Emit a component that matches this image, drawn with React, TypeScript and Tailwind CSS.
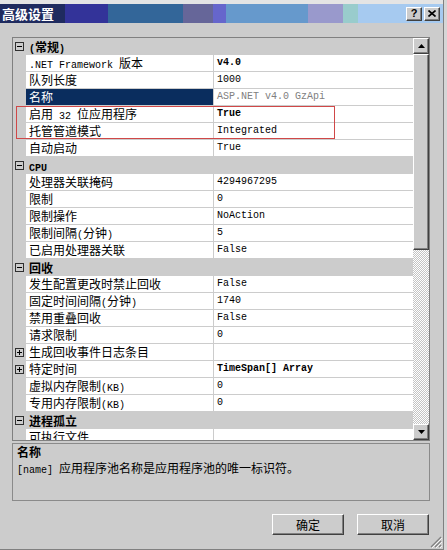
type Item = {
  label: string;
  value?: string;
  bold?: boolean;
  sel?: boolean;
  plus?: boolean;
  cat?: boolean;
};

const items: Item[] = [
  { label: "(常规)", cat: true },
  { label: ".NET Framework 版本", value: "v4.0", bold: true },
  { label: "队列长度", value: "1000" },
  { label: "名称", value: "ASP.NET v4.0 GzApi", sel: true },
  { label: "启用 32 位应用程序", value: "True", bold: true },
  { label: "托管管道模式", value: "Integrated" },
  { label: "自动启动", value: "True" },
  { label: "CPU", cat: true },
  { label: "处理器关联掩码", value: "4294967295" },
  { label: "限制", value: "0" },
  { label: "限制操作", value: "NoAction" },
  { label: "限制间隔(分钟)", value: "5" },
  { label: "已启用处理器关联", value: "False" },
  { label: "回收", cat: true },
  { label: "发生配置更改时禁止回收", value: "False" },
  { label: "固定时间间隔(分钟)", value: "1740" },
  { label: "禁用重叠回收", value: "False" },
  { label: "请求限制", value: "0" },
  { label: "生成回收事件日志条目", value: "", plus: true },
  { label: "特定时间", value: "TimeSpan[] Array", bold: true, plus: true },
  { label: "虚拟内存限制(KB)", value: "0" },
  { label: "专用内存限制(KB)", value: "0" },
  { label: "进程孤立", cat: true },
  { label: "可执行文件", value: "" },
];

// ascii runs get the narrow mono face, like the old bitmap font
const Mix = ({ text }: { text: string }) => {
  const parts = text.split(/([\x20-\x7e]+)/).filter(Boolean);
  return (
    <>
      {parts.map((p, i) =>
        /^[\x20-\x7e]+$/.test(p) ? (
          <span key={i} className="font-['Liberation_Mono',monospace] text-[10px] whitespace-pre">
            {p}
          </span>
        ) : (
          <span key={i}>{p}</span>
        )
      )}
    </>
  );
};

const Toggle = ({ plus }: { plus?: boolean }) => (
  <svg width="9" height="9" viewBox="0 0 9 9">
    <rect x="0.5" y="0.5" width="8" height="8" fill="none" stroke="#303030" />
    <path d="M2 4.5h5" stroke="#000" />
    {plus && <path d="M4.5 2v5" stroke="#000" />}
  </svg>
);

const Row = ({ it }: { it: Item }) => {
  if (it.cat) {
    return (
      <div className="flex h-[17px] shrink-0 bg-[#cccccc] font-bold">
        <div className="w-[13px] flex items-center justify-center">
          <Toggle />
        </div>
        <div className="pl-[3px] leading-[17px] whitespace-nowrap">
          <Mix text={it.label} />
        </div>
      </div>
    );
  }
  return (
    <div className="flex h-[17px] shrink-0">
      <div className="w-[13px] bg-[#cccccc] flex items-center justify-center">
        {it.plus && <Toggle plus />}
      </div>
      <div
        className={`w-[187px] border-b border-[#cccccc] pl-[3px] leading-[16px] whitespace-nowrap overflow-hidden ${
          it.sel ? "bg-[#0a2d5e] text-white" : "bg-white"
        }`}
      >
        <Mix text={it.label} />
      </div>
      <div
        className={`w-[200px] bg-white border-b border-l border-[#cccccc] pl-[3px] leading-[16px] whitespace-pre overflow-hidden font-['Liberation_Mono',monospace] text-[10px] ${
          it.bold ? "font-bold" : ""
        } ${it.sel ? "text-[#808080]" : ""}`}
      >
        {it.value}
      </div>
    </div>
  );
};

const bevel =
  "bg-[#cccccc] border border-t-white border-l-white border-r-[#404040] border-b-[#404040] shadow-[inset_-1px_-1px_0_#808080]";

const Arrow = ({ up }: { up?: boolean }) => (
  <svg width="7" height="4" viewBox="0 0 7 4">
    <path d={up ? "M3.5 0L7 4H0z" : "M0 0h7L3.5 4z"} fill="#000" />
  </svg>
);

const App = () => {
  return (
    <div className="w-[447px] h-[550px] bg-[#d6d6d6] overflow-hidden font-['Noto_Sans_CJK_SC',sans-serif] text-[12px] text-black">
      <div className="relative w-[444px] h-[550px] bg-[#cccccc] border-r border-b border-[#808080] flex flex-col">
        <div className="h-[4px] bg-[#e4e4e4]" />

        {/* title bar */}
        <div className="h-[19px] flex">
          <div className="w-[65px] bg-[#1f2b5f] text-white font-bold text-[13px] leading-[19px] pl-[2px] whitespace-nowrap">
            高级设置
          </div>
          <div className="w-[43px] bg-[#333399]" />
          <div className="w-[75px] bg-[#336699]" />
          <div className="w-[30px] bg-[#666699]" />
          <div className="w-[13px] bg-[#6666cc]" />
          <div className="w-[82px] bg-[#6699cc]" />
          <div className="w-[35px] bg-[#9999cc]" />
          <div className="w-[15px] bg-[#99cccc]" />
          <div className="flex-1 bg-[#a6caf0] flex items-center justify-end gap-[2px] pr-[3px]">
            <div className={`w-[16px] h-[14px] flex items-center justify-center ${bevel}`}>
              <span className="font-['Liberation_Sans',sans-serif] font-bold text-[11px] leading-none">?</span>
            </div>
            <div className={`w-[16px] h-[14px] flex items-center justify-center ${bevel}`}>
              <svg width="8" height="7" viewBox="0 0 8 7">
                <path d="M0.5 0.5l7 6M7.5 0.5l-7 6" stroke="#000" strokeWidth="1.6" />
              </svg>
            </div>
          </div>
        </div>

        {/* property grid */}
        <div className="relative mt-[14px] ml-[12px] w-[418px] h-[404px] border border-[#808080] flex overflow-hidden">
          <div className="w-[400px] flex flex-col overflow-hidden">
            {items.map((it, i) => (
              <Row key={i} it={it} />
            ))}
          </div>
          <div className="w-[16px] flex flex-col">
            <div className={`h-[16px] flex items-center justify-center ${bevel}`}>
              <Arrow up />
            </div>
            <div className={`h-[196px] ${bevel}`} />
            <div className="flex-1 bg-[image:repeating-conic-gradient(#ffffff_0_25%,#c4c4c4_0_50%)] bg-[length:2px_2px] bg-size-[2px_2px]" />
            <div className={`h-[16px] flex items-center justify-center ${bevel}`}>
              <Arrow />
            </div>
          </div>
          <div className="absolute left-[3px] top-[68px] w-[319px] h-[33px] border border-[#d04848] pointer-events-none" />
        </div>

        {/* description */}
        <div className="mt-[2px] ml-[12px] w-[418px] h-[58px] border border-[#8a8a8a] px-[4px] leading-[16px]">
          <div className="font-bold">名称</div>
          <div className="whitespace-nowrap">
            <Mix text="[name] 应用程序池名称是应用程序池的唯一标识符。" />
          </div>
        </div>

        {/* buttons */}
        <div className="mt-[13px] flex justify-end gap-[13px] pr-[14px]">
          <div className={`w-[72px] h-[21px] flex items-center justify-center ${bevel}`}>确定</div>
          <div className={`w-[72px] h-[21px] flex items-center justify-center ${bevel}`}>取消</div>
        </div>

        {/* resize grip */}
        <svg className="absolute right-[1px] bottom-[1px]" width="12" height="12" viewBox="0 0 12 12">
          <path d="M11 1L1 11M11 5L5 11M11 9L9 11" stroke="#808080" strokeWidth="1.2" />
          <path d="M12 2L2 12M12 6L6 12M12 10L10 12" stroke="#ffffff" strokeWidth="0.8" />
        </svg>
      </div>
    </div>
  );
};

export default App;
